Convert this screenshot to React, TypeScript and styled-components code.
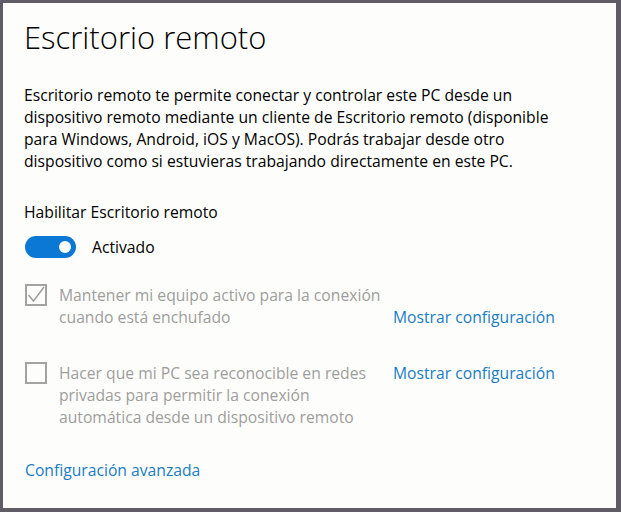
import * as React from "react";
import styled, { createGlobalStyle } from "styled-components";

const GlobalStyle = createGlobalStyle`
  html, body, #root {
    height: 100%;
  }
  body {
    margin: 0;
    font-family: "Open Sans", "Noto Sans", sans-serif;
  }
  * {
    box-sizing: border-box;
  }
`;

const Frame = styled.div`
  height: 100%;
  background: #5f5c66;
  padding: 3px 5px 4px 3px;
`;

const Panel = styled.main`
  height: 100%;
  background: #fdfdfb;
  padding: 14px 21px 0 21px;
  color: #000;
`;

const Title = styled.h1`
  margin: 0;
  font-size: 31px;
  font-weight: 300;
  line-height: 40px;
`;

const Description = styled.p`
  margin: 27px 0 0;
  max-width: 545px;
  font-size: 15.7px;
  line-height: 22px;
`;

const Label = styled.div`
  margin-top: 30px;
  font-size: 15.7px;
  line-height: 20px;
`;

const ToggleRow = styled.div`
  display: flex;
  align-items: center;
  gap: 16px;
  margin-top: 14px;
  font-size: 15.7px;
`;

const Toggle = styled.div<{ $on: boolean }>`
  position: relative;
  width: 51px;
  height: 22px;
  border-radius: 11px;
  margin-left: 1px;
  background: ${(p) => (p.$on ? "#0a78d4" : "#ffffff")};
  &::after {
    content: "";
    position: absolute;
    top: 5px;
    ${(p) => (p.$on ? "right: 5px;" : "left: 5px;")}
    width: 12px;
    height: 12px;
    border-radius: 50%;
    background: #fff;
  }
`;

const Option = styled.div<{ $linkAt: "start" | "end" }>`
  display: grid;
  grid-template-columns: 34px 334px auto;
  align-items: ${(p) => p.$linkAt};
  margin-top: ${(p) => (p.$linkAt === "end" ? "26px" : "34px")};
  margin-left: 1px;
`;

const Box = styled.div`
  align-self: start;
  width: 22px;
  height: 22px;
  margin-top: 0;
  border: 2px solid #a3a3a3;
  display: flex;
  align-items: center;
  justify-content: center;
`;

const OptionText = styled.div`
  font-size: 15.7px;
  line-height: 22px;
  color: #9d9d9d;
`;

const Link = styled.a`
  color: #1a7cc4;
  font-size: 15.7px;
  line-height: 22px;
  text-decoration: none;
  cursor: pointer;
`;

const AdvancedLink = styled(Link)`
  display: block;
  margin-top: 31px;
  margin-left: 1px;
`;

function Check() {
  return (
    <svg width="18" height="18" viewBox="0 0 18 18">
      <polyline
        points="1.5,9 6.5,15 17,1"
        fill="none"
        stroke="#9a9a9a"
        strokeWidth="1.4"
      />
    </svg>
  );
}

export default function App() {
  return (
    <>
      <GlobalStyle />
      <Frame>
        <Panel>
          <Title>Escritorio remoto</Title>
          <Description>
            Escritorio remoto te permite conectar y controlar este PC desde un
            dispositivo remoto mediante un cliente de Escritorio remoto
            (disponible para Windows, Android, iOS y MacOS). Podrás trabajar
            desde otro dispositivo como si estuvieras trabajando directamente
            en este PC.
          </Description>
          <Label>Habilitar Escritorio remoto</Label>
          <ToggleRow>
            <Toggle $on />
            <span>Activado</span>
          </ToggleRow>
          <Option $linkAt="end">
            <Box>
              <Check />
            </Box>
            <OptionText>
              Mantener mi equipo activo para la conexión cuando está enchufado
            </OptionText>
            <Link>Mostrar configuración</Link>
          </Option>
          <Option $linkAt="start">
            <Box />
            <OptionText>
              Hacer que mi PC sea reconocible en redes privadas para permitir
              la conexión automática desde un dispositivo remoto
            </OptionText>
            <Link>Mostrar configuración</Link>
          </Option>
          <AdvancedLink>Configuración avanzada</AdvancedLink>
        </Panel>
      </Frame>
    </>
  );
}
